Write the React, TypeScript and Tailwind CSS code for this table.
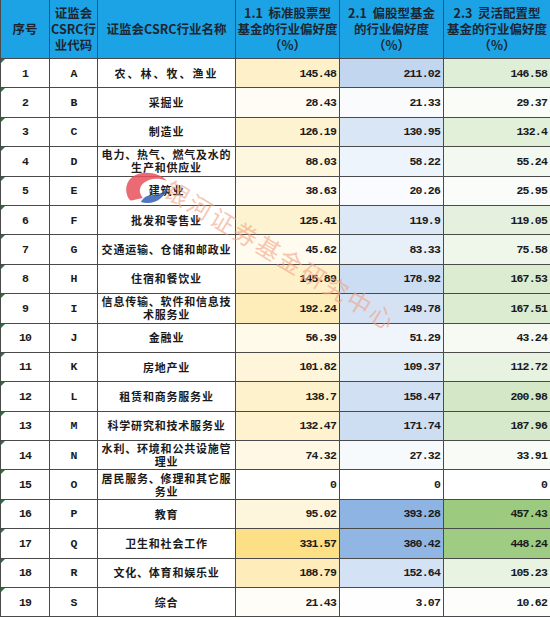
import { Fragment } from 'react';

type Row = {
  no: number;
  code: string;
  name: string;
  a: number;
  b: number;
  c: number;
  wide?: boolean;
};

const ROWS: Row[] = [
  { no: 1, code: 'A', name: '农、林、牧、渔业', a: 145.48, b: 211.02, c: 146.58, wide: true },
  { no: 2, code: 'B', name: '采掘业', a: 28.43, b: 21.33, c: 29.37 },
  { no: 3, code: 'C', name: '制造业', a: 126.19, b: 130.95, c: 132.4 },
  { no: 4, code: 'D', name: '电力、热气、燃气及水的\n生产和供应业', a: 88.03, b: 58.22, c: 55.24 },
  { no: 5, code: 'E', name: '建筑业', a: 38.63, b: 20.26, c: 25.95 },
  { no: 6, code: 'F', name: '批发和零售业', a: 125.41, b: 119.9, c: 119.05 },
  { no: 7, code: 'G', name: '交通运输、仓储和邮政业', a: 45.62, b: 83.33, c: 75.58 },
  { no: 8, code: 'H', name: '住宿和餐饮业', a: 145.89, b: 178.92, c: 167.53 },
  { no: 9, code: 'I', name: '信息传输、软件和信息技\n术服务业', a: 192.24, b: 149.78, c: 167.51 },
  { no: 10, code: 'J', name: '金融业', a: 56.39, b: 51.29, c: 43.24 },
  { no: 11, code: 'K', name: '房地产业', a: 101.82, b: 109.37, c: 112.72 },
  { no: 12, code: 'L', name: '租赁和商务服务业', a: 138.7, b: 158.47, c: 200.98 },
  { no: 13, code: 'M', name: '科学研究和技术服务业', a: 132.47, b: 171.74, c: 187.96 },
  { no: 14, code: 'N', name: '水利、环境和公共设施管\n理业', a: 74.32, b: 27.32, c: 33.91 },
  { no: 15, code: 'O', name: '居民服务、修理和其它服\n务业', a: 0, b: 0, c: 0 },
  { no: 16, code: 'P', name: '教育', a: 95.02, b: 393.28, c: 457.43 },
  { no: 17, code: 'Q', name: '卫生和社会工作', a: 331.57, b: 380.42, c: 448.24 },
  { no: 18, code: 'R', name: '文化、体育和娱乐业', a: 188.79, b: 152.64, c: 105.23 },
  { no: 19, code: 'S', name: '综合', a: 21.43, b: 3.07, c: 10.62 },
];

// excel-style two colour scale: white at 0, full colour at column max
function scale(value: number, max: number, rgb: [number, number, number]) {
  const t = max ? value / max : 0;
  const mix = (c: number) => Math.round(255 - (255 - c) * t);
  return `rgb(${mix(rgb[0])}, ${mix(rgb[1])}, ${mix(rgb[2])})`;
}

const YELLOW: [number, number, number] = [253, 223, 134];
const BLUE: [number, number, number] = [141, 180, 226];
const GREEN: [number, number, number] = [156, 203, 128];

const maxA = Math.max(...ROWS.map((r) => r.a));
const maxB = Math.max(...ROWS.map((r) => r.b));
const maxC = Math.max(...ROWS.map((r) => r.c));

const cjk = "font-['Noto_Sans_CJK_SC','Noto_Sans',sans-serif]";
const num = "font-['Liberation_Mono',monospace] font-bold text-[11.5px] tracking-[-0.8px] text-[#1a1a1a]";

function HeadCell({ lines }: { lines: string[] }) {
  return (
    <div
      className={`flex flex-col items-center justify-center bg-[#1ca3e6] text-center text-[12.5px] font-semibold leading-[16px] text-[#1c2630] ${cjk}`}
    >
      {lines.map((l) => (
        <span key={l} className="whitespace-pre">
          {l}
        </span>
      ))}
    </div>
  );
}

function NumCell({ value, bg }: { value: number; bg: string }) {
  return (
    <div className={`flex items-center justify-end pr-[3px] ${num}`} style={{ backgroundColor: bg }}>
      {value}
    </div>
  );
}

function Logo() {
  return (
    <svg width="46" height="34" viewBox="0 0 44 32">
      <path
        d="M7 28 C-1 19 3 3 20 1.5 C30 1 37 4 42 9 C33 5.5 25 7 20 11 C15 15 15 21 19 25.5 C14 26.5 10 27.5 7 28 Z"
        fill="#e8505b"
        opacity="0.85"
      />
      <path
        d="M17 29.5 C30 33 41 25 43.5 13.5 C40 20 34 23 27 23 C22.5 23 19.5 25.5 17 29.5 Z"
        fill="#2f5fb3"
        opacity="0.85"
      />
    </svg>
  );
}

export default function App() {
  return (
    <div className="relative w-[550px] bg-white">
      <div className="grid grid-cols-[48px_47px_137px_103px_103px_106px] grid-rows-[58px_repeat(19,28.4px)] gap-px bg-[#4a4a4a] pb-px pl-px">
        <HeadCell lines={['序号']} />
        <HeadCell lines={['证监会', 'CSRC行', '业代码']} />
        <HeadCell lines={['证监会CSRC行业名称']} />
        <HeadCell lines={['1.1  标准股票型', '基金的行业偏好度', '（%）']} />
        <HeadCell lines={['2.1  偏股型基金', '的行业偏好度', '（%）']} />
        <HeadCell lines={['2.3  灵活配置型', '基金的行业偏好度', '（%）']} />

        {ROWS.map((r) => (
          <Fragment key={r.no}>
            <div className={`relative flex items-center justify-center bg-white ${num}`}>
              <span className="absolute left-0 top-0 h-0 w-0 border-r-[4px] border-t-[4px] border-r-transparent border-t-[#1f7a3c]" />
              {r.no}
            </div>
            <div className={`flex items-center justify-center bg-white ${num}`}>{r.code}</div>
            <div
              className={`flex items-center justify-center whitespace-pre-line bg-white text-center text-[11px] font-semibold leading-[13px] text-[#1a1a1a] ${r.wide ? 'tracking-[2px]' : 'tracking-[0.8px]'} ${cjk}`}
            >
              {r.name}
            </div>
            <NumCell value={r.a} bg={scale(r.a, maxA, YELLOW)} />
            <NumCell value={r.b} bg={scale(r.b, maxB, BLUE)} />
            <NumCell value={r.c} bg={scale(r.c, maxC, GREEN)} />
          </Fragment>
        ))}
      </div>

      {/* watermark */}
      <div className="pointer-events-none absolute left-[123px] top-[171px]">
        <Logo />
      </div>
      <div
        className={`pointer-events-none absolute left-[281px] top-[255px] -translate-x-1/2 -translate-y-1/2 rotate-[31deg] whitespace-nowrap text-[24px] tracking-[2.5px] text-[#f2a080]/60 ${cjk}`}
      >
        银河证券基金研究中心
      </div>
    </div>
  );
}
